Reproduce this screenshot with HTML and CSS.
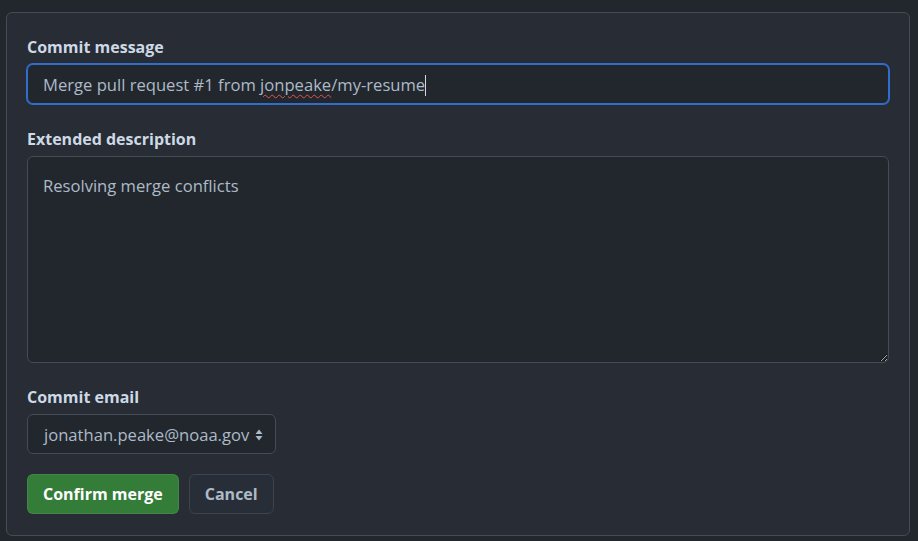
FILE: index.html
```html
<!DOCTYPE html>
<html lang="en">
<head>
<meta charset="utf-8">
<title>Merge</title>
<link rel="stylesheet" href="styles.css">
</head>
<body>
<form class="panel">
  <label class="label">Commit message</label>
  <div class="field field-focus">Merge pull request #1 from <span class="typo">jonpeake</span>/my-resume<span class="caret"></span></div>
  <label class="label label-gap">Extended description</label>
  <textarea class="area">Resolving merge conflicts</textarea>
  <label class="label label-gap-sm">Commit email</label>
  <div class="select">
    <span>jonathan.peake@noaa.gov</span>
    <svg class="arrows" width="8" height="12" viewBox="0 0 8 12"><path d="M4 0.5 L7.5 5 L0.5 5 Z M4 11.5 L7.5 7 L0.5 7 Z" fill="#adbac7"/></svg>
  </div>
  <div class="actions">
    <button type="button" class="btn btn-primary">Confirm merge</button>
    <button type="button" class="btn btn-default">Cancel</button>
  </div>
</form>
</body>
</html>
```
FILE: styles.css
```css
html, body {
  margin: 0;
  padding: 0;
  background: #22272e;
}
body {
  font-family: "Open Sans", "Noto Sans", "Liberation Sans", sans-serif;
  color: #adbac7;
  padding: 12px 8px 6px 6px;
}
.panel {
  display: flex;
  flex-direction: column;
  align-items: flex-start;
  background: #272c35;
  border: 1px solid #444c56;
  border-radius: 6px;
  padding: 22px 20px 19px 20px;
  height: 481px;
}
.label {
  font-size: 16px;
  font-weight: 700;
  line-height: 24px;
  color: #cdd9e5;
  margin-bottom: 5px;
}
.label-gap {
  margin-top: 23px;
}
.label-gap-sm {
  margin-top: 22px;
}
.field {
  box-sizing: border-box;
  width: 100%;
  height: 40px;
  background: #22272e;
  border: 1px solid #444c56;
  border-radius: 6px;
  padding: 2px 15px 0;
  font-size: 16.6px;
  line-height: 36px;
  color: #adbac7;
  white-space: nowrap;
}
.field-focus {
  border-color: #316dca;
  box-shadow: 0 0 0 1px #316dca;
}
.typo {
  text-decoration: underline wavy #e5534b;
  text-decoration-thickness: 1px;
  text-underline-offset: 3px;
}
.caret {
  display: inline-block;
  width: 1px;
  height: 21px;
  background: #cdd9e5;
  vertical-align: -5px;
}
.area {
  box-sizing: border-box;
  width: 100%;
  height: 207px;
  margin: 0;
  background: #22272e;
  border: 1px solid #444c56;
  border-radius: 6px;
  padding: 17px 15px 15px;
  font-family: inherit;
  font-size: 16.6px;
  line-height: 24px;
  color: #adbac7;
  color-scheme: dark;
  resize: vertical;
  outline: none;
}
.select {
  box-sizing: border-box;
  height: 40px;
  display: flex;
  align-items: center;
  gap: 6px;
  background: #22272e;
  border: 1px solid #444c56;
  border-radius: 6px;
  padding: 1px 12px 0 16px;
  font-size: 16.6px;
  color: #adbac7;
}
.arrows {
  display: block;
}
.actions {
  display: flex;
  gap: 10px;
  margin-top: 20px;
}
.btn {
  box-sizing: border-box;
  height: 40px;
  padding: 0 15px;
  border-radius: 6px;
  font-family: inherit;
  font-size: 16px;
  font-weight: 700;
  cursor: pointer;
}
.btn-primary {
  background: #347d39;
  border: 1px solid rgba(205, 217, 229, 0.1);
  color: #ffffff;
}
.btn-default {
  background: #282e37;
  border: 1px solid #3d444d;
  color: #adbac7;
}
```
